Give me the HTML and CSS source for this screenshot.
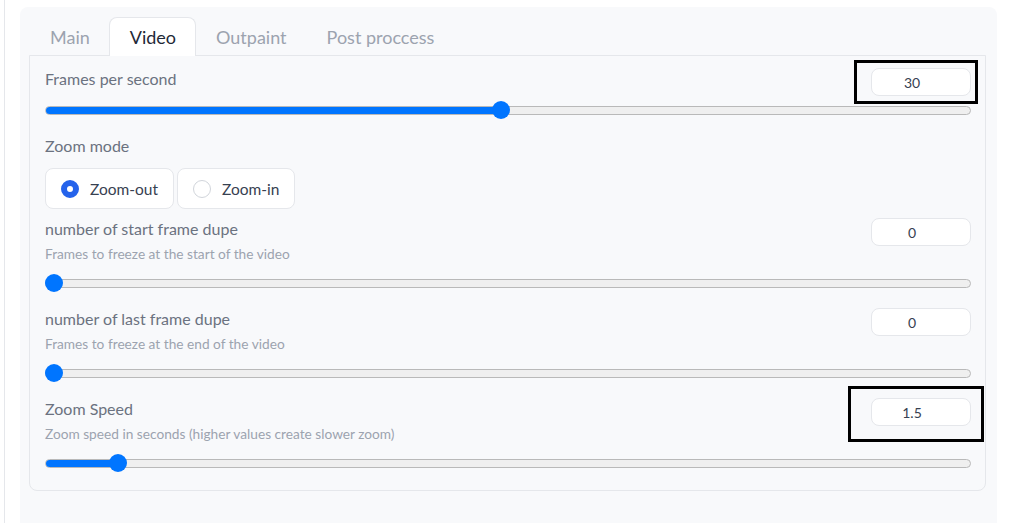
FILE: index.html
```html
<!DOCTYPE html>
<html lang="en">
<head>
    <meta charset="UTF-8">
    <title>Video settings</title>
    <link rel="stylesheet" href="styles.css">
</head>
<body>
    <div class="frame">
        <div class="panel">
            <div class="tabs">
                <button class="tab">Main</button>
                <button class="tab active">Video</button>
                <button class="tab">Outpaint</button>
                <button class="tab">Post proccess</button>
            </div>
            <div class="tab-content">

                <div class="block slider-block">
                    <div class="head">
                        <div class="texts">
                            <label class="label">Frames per second</label>
                        </div>
                        <div class="num-wrap">
                            <input class="num" type="text" value="30">
                            <span class="mark mark-fps"></span>
                        </div>
                    </div>
                    <div class="slider">
                        <div class="track"><div class="fill" style="width: 456px"></div></div>
                        <span class="thumb" style="left: 447px"></span>
                    </div>
                </div>

                <div class="block">
                    <label class="label">Zoom mode</label>
                    <div class="radios">
                        <label class="radio"><span class="dot checked"></span>Zoom-out</label>
                        <label class="radio"><span class="dot"></span>Zoom-in</label>
                    </div>
                </div>

                <div class="block slider-block">
                    <div class="head">
                        <div class="texts">
                            <label class="label">number of start frame dupe</label>
                            <p class="info">Frames to freeze at the start of the video</p>
                        </div>
                        <div class="num-wrap">
                            <input class="num" type="text" value="0">
                        </div>
                    </div>
                    <div class="slider">
                        <div class="track"><div class="fill" style="width: 9px"></div></div>
                        <span class="thumb" style="left: 0px"></span>
                    </div>
                </div>

                <div class="block slider-block">
                    <div class="head">
                        <div class="texts">
                            <label class="label">number of last frame dupe</label>
                            <p class="info">Frames to freeze at the end of the video</p>
                        </div>
                        <div class="num-wrap">
                            <input class="num" type="text" value="0">
                        </div>
                    </div>
                    <div class="slider">
                        <div class="track"><div class="fill" style="width: 9px"></div></div>
                        <span class="thumb" style="left: 0px"></span>
                    </div>
                </div>

                <div class="block slider-block">
                    <div class="head">
                        <div class="texts">
                            <label class="label">Zoom Speed</label>
                            <p class="info">Zoom speed in seconds (higher values create slower zoom)</p>
                        </div>
                        <div class="num-wrap">
                            <input class="num" type="text" value="1.5">
                            <span class="mark mark-speed"></span>
                        </div>
                    </div>
                    <div class="slider">
                        <div class="track"><div class="fill" style="width: 73px"></div></div>
                        <span class="thumb" style="left: 64px"></span>
                    </div>
                </div>

            </div>
        </div>
    </div>
</body>
</html>
```

FILE: styles.css
```css
html, body{
    margin: 0;
    height: 100%;
    background: #fff;
    overflow: hidden;
}
body{
    font-family: "Lato", "Liberation Sans", sans-serif;
    padding-left: 4px;
}
.frame{
    border-left: 1px solid #e5e7eb;
    height: 100%;
    padding: 7px 0 0 15px;
    box-sizing: border-box;
    display: flex;
    flex-direction: column;
}
.panel{
    flex: 1;
    width: 977px;
    background: #f8f9fb;
    border-radius: 8px 8px 0 0;
    padding: 10px 11px 0 9px;
    box-sizing: border-box;
}

.tabs{
    display: flex;
    height: 38px;
}
.tab{
    font-family: inherit;
    font-size: 18px;
    color: #9ca3af;
    background: none;
    border: 1px solid transparent;
    border-bottom: none;
    border-radius: 8px 8px 0 0;
    padding: 0 19px 0 20px;
    height: 39px;
    margin-bottom: -1px;
    margin-right: -1px;
    position: relative;
    z-index: 1;
}
.tab.active{
    color: #1f2937;
    background: #fff;
    border-color: #e5e7eb;
}

.tab-content{
    border: 1px solid #e5e7eb;
    border-radius: 0 0 8px 8px;
    padding: 12px 14px 12px 15px;
    display: flex;
    flex-direction: column;
    gap: 10px;
}

.slider-block{
    padding-bottom: 6px;
}
.head{
    display: flex;
    justify-content: space-between;
    align-items: flex-start;
}
.label{
    display: block;
    font-size: 16px;
    line-height: 20px;
    color: #6b7280;
    padding-top: 1px;
}
.info{
    margin: 6px 0;
    font-size: 13.7px;
    line-height: 18px;
    color: #9ca3af;
}

.num-wrap{
    position: relative;
}
.num{
    display: block;
    width: 100px;
    height: 28px;
    box-sizing: border-box;
    border: 1px solid #e5e7eb;
    border-radius: 8px;
    background: #fff;
    padding: 0 18px 0 0;
    text-align: center;
    font-family: inherit;
    font-size: 14px;
    color: #374151;
    outline: none;
}
.mark{
    position: absolute;
    border: 3px solid #000;
}
.mark-fps{
    left: -17px;
    right: -7px;
    top: -8px;
    bottom: -8px;
}
.mark-speed{
    left: -23px;
    right: -13px;
    top: -12px;
    bottom: -16px;
}

.slider{
    position: relative;
    height: 18px;
    margin-top: 5px;
    display: flex;
    align-items: center;
}
.track{
    flex: 1;
    height: 9px;
    box-sizing: border-box;
    border: 1px solid #b9b9b9;
    background: #efefef;
    border-radius: 5px;
    overflow: hidden;
}
.fill{
    height: 100%;
    background: #0075ff;
}
.thumb{
    position: absolute;
    top: 0;
    width: 18px;
    height: 18px;
    border-radius: 50%;
    background: #0075ff;
}

.radios{
    display: flex;
    gap: 3px;
    margin-top: 12px;
}
.radio{
    display: flex;
    align-items: center;
    gap: 11px;
    height: 41px;
    box-sizing: border-box;
    padding: 0 15px;
    border: 1px solid #e5e7eb;
    border-radius: 8px;
    background: #fff;
    font-size: 15.5px;
    color: #374151;
    margin-bottom: -1px;
}
.dot{
    width: 18px;
    height: 18px;
    box-sizing: border-box;
    border-radius: 50%;
    border: 1px solid #d1d5db;
    background: #fff;
}
.dot.checked{
    border: 6px solid #2563eb;
}
```
